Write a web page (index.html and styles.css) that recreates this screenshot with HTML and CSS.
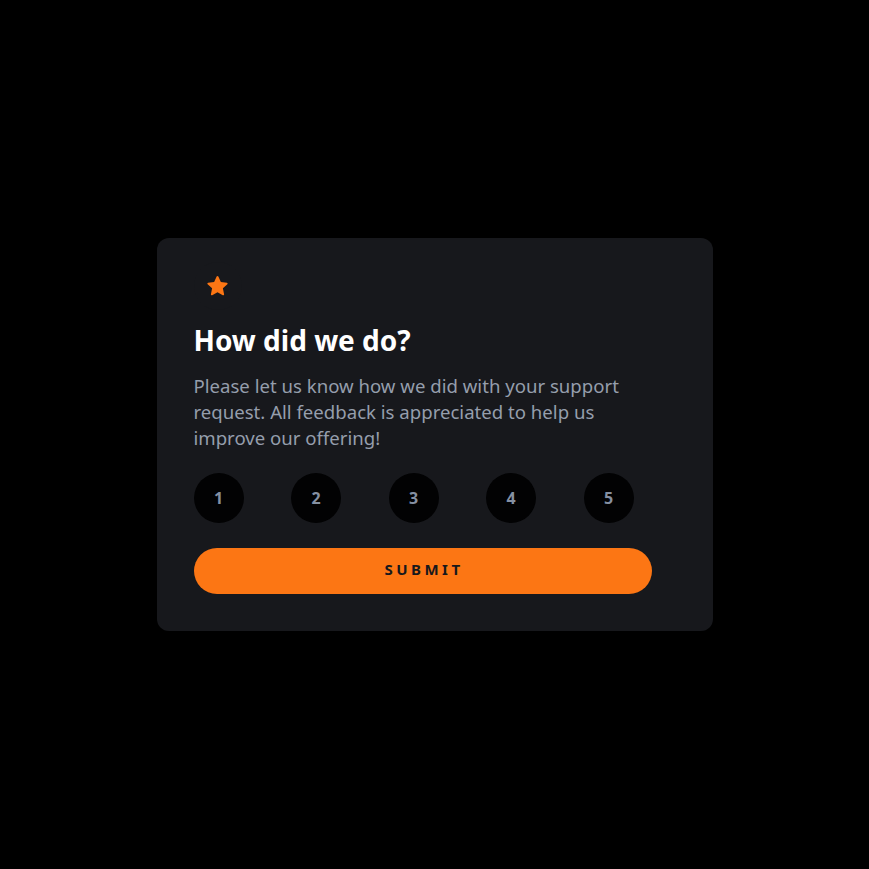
FILE: index.html
```html
<!DOCTYPE html>
<html lang="en">
<head>
<meta charset="utf-8">
<title>Rating</title>
<link rel="stylesheet" href="styles.css">
</head>
<body>
<main class="card">
  <div class="icon">
    <svg width="17" height="16" viewBox="0 0 17 16" aria-hidden="true"><path d="M9.138 1.014 10.981 5.08l4.436.518c.546.064.766.74.36 1.111l-3.292 3.025.874 4.38c.107.54-.468.958-.947.688L8.5 12.618l-3.912 2.184c-.479.27-1.054-.148-.947-.688l.874-4.38L1.223 6.709c-.406-.371-.186-1.047.36-1.111l4.436-.518L7.862 1.014c.229-.5.947-.5 1.276 0Z" fill="#FC7614"/></svg>
  </div>
  <h1 class="title">How did we do?</h1>
  <p class="text">Please let us know how we did with your support request. All feedback is appreciated to help us improve our offering!</p>
  <div class="ratings">
    <button class="rate">1</button>
    <button class="rate">2</button>
    <button class="rate">3</button>
    <button class="rate">4</button>
    <button class="rate">5</button>
  </div>
  <button class="submit">SUBMIT</button>
</main>
</body>
</html>
```
FILE: styles.css
```css
html, body {
  margin: 0;
  padding: 0;
  background: #000;
}
body {
  min-height: 100vh;
  display: flex;
  align-items: center;
  justify-content: center;
  font-family: "Noto Sans", "Open Sans", sans-serif;
}
.card {
  box-sizing: border-box;
  width: 556px;
  background: #17181c;
  border-radius: 12px;
  padding: 24px 61px 37px 37px;
}
.icon {
  width: 48px;
  height: 48px;
  border-radius: 50%;
  background: #17181c;
  display: flex;
  align-items: center;
  justify-content: center;
}
.icon svg {
  width: 23px;
  height: 22px;
}
.title {
  margin: 12px 0 0;
  color: #fff;
  font-size: 28px;
  font-weight: 700;
  line-height: 36px;
}
.text {
  margin: 15px 0 0;
  color: #959eac;
  font-size: 18.6px;
  line-height: 26px;
}
.ratings {
  margin-top: 22px;
  width: 440px;
  display: flex;
  justify-content: space-between;
}
.rate {
  width: 50px;
  height: 50px;
  border-radius: 50%;
  border: none;
  background: #020203;
  color: #8590a2;
  font-family: inherit;
  font-size: 16px;
  font-weight: 700;
  padding: 0 0 1px;
}
.submit {
  display: block;
  width: 458px;
  height: 46px;
  margin-top: 25px;
  border: none;
  border-radius: 23px;
  background: #fc7614;
  color: #17181c;
  font-family: inherit;
  font-size: 15px;
  font-weight: 700;
  letter-spacing: 3.5px;
  padding: 0 0 5px 3px;
}
```
